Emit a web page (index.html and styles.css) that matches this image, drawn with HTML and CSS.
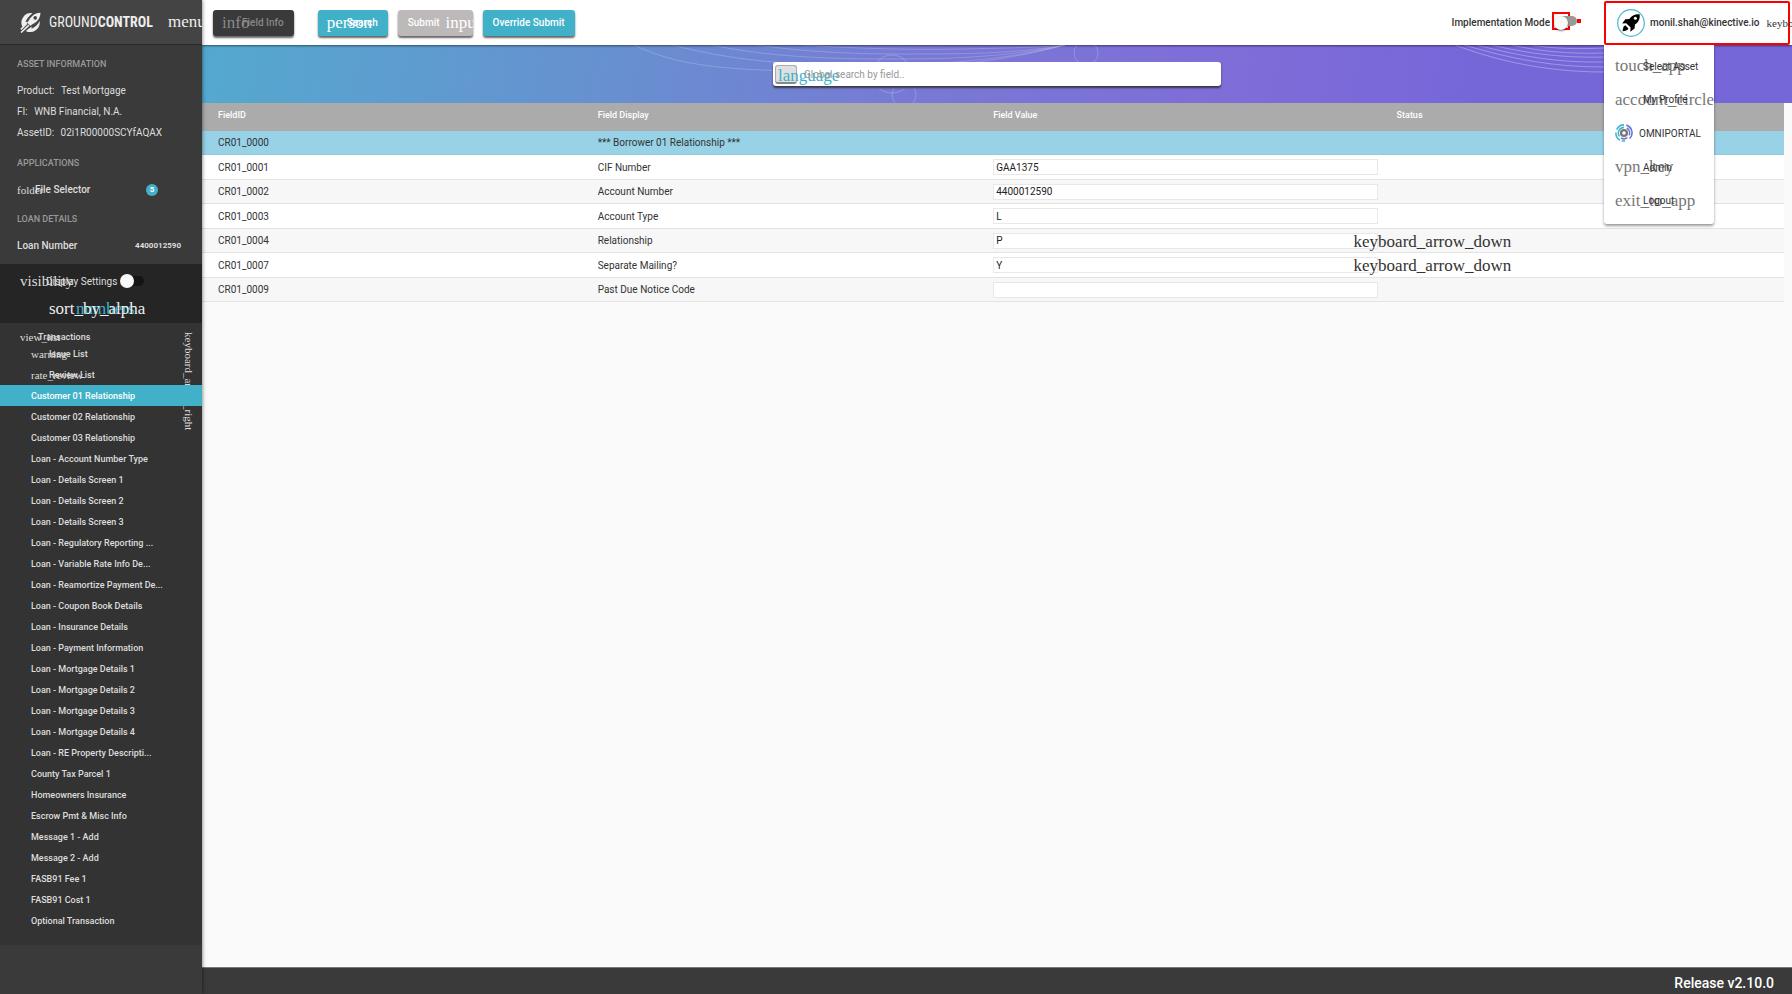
FILE: index.html
```html
<!DOCTYPE html>
<html lang="en">
<head>
    <meta charset="UTF-8">
    <meta name="viewport" content="width=device-width, initial-scale=1.0">
    <title>GroundControl</title>
    <link rel="stylesheet" href="styles.css">
</head>
<body>

<aside class="sidebar">
    <div class="brand">
        <svg class="brand-mark" viewBox="0 0 20 20" aria-hidden="true">
            <path d="M12 1.2A9 9 0 0 0 2.6 14.6L8.2 9.3L5.2 9.5C7 5.500 9.500 3 12 1.200Z" fill="#eee"/>
            <path d="M19.500.6C14.500.6 11 3.600 8.600 7.600L7 10.400L9.800 13L12.600 11.300C16.500 9 19.500 5.500 19.500.6Z" fill="#eee"/>
            <circle cx="14.500" cy="5.600" r="1.700" fill="#444"/>
            <path d="M18.600 8.600A9 9 0 0 1 5.500 18L11 13.800V16C14.500 14.500 17.500 11.500 18.600 8.600Z" fill="#eee"/>
            <path d="M1 19.500L8.500 12.500M.8 16.500L6.500 11" stroke="#eee" stroke-width="1.500"/>
        </svg>
        <span class="brand-name">GROUND<b>CONTROL</b></span>
        <button class="menu-button" aria-label="Menu"><i class="icon">menu</i></button>
    </div>

    <section class="info">
        <h2>Asset Information</h2>
        <p>Product: <span>Test Mortgage</span></p>
        <p>FI: <span>WNB Financial, N.A.</span></p>
        <p>AssetID: <span>02i1R00000SCYfAQAX</span></p>
        <h2>Applications</h2>
        <a class="row" href="#"><i class="icon small">folder</i>File Selector<b class="badge">5</b></a>
        <h2>Loan Details</h2>
        <div class="row">Loan Number<b class="loan-number">4400012590</b></div>
    </section>

    <section class="settings">
        <label class="display-settings">
            <i class="icon medium">visibility</i>Display Settings
            <input type="checkbox" class="switch">
        </label>
        <div class="sorting">
            <button class="sort-alpha"><i class="icon">sort_by_alpha</i></button>
            <button class="sort-number"><i class="icon">numbers</i></button>
        </div>
    </section>

    <nav class="transactions">
        <a class="group" href="#"><i class="icon small">view_list</i>Transactions</a>
        <i class="icon small expand">keyboard_arrow_right</i>
        <a href="#"><i class="icon small">warning</i>Issue List</a>
        <a href="#"><i class="icon small">rate_review</i>Review List</a>
        <a class="active" href="#">Customer 01 Relationship</a>
        <a href="#">Customer 02 Relationship</a>
        <a href="#">Customer 03 Relationship</a>
        <a href="#">Loan - Account Number Type</a>
        <a href="#">Loan - Details Screen 1</a>
        <a href="#">Loan - Details Screen 2</a>
        <a href="#">Loan - Details Screen 3</a>
        <a href="#">Loan - Regulatory Reporting ...</a>
        <a href="#">Loan - Variable Rate Info De...</a>
        <a href="#">Loan - Reamortize Payment De...</a>
        <a href="#">Loan - Coupon Book Details</a>
        <a href="#">Loan - Insurance Details</a>
        <a href="#">Loan - Payment Information</a>
        <a href="#">Loan - Mortgage Details 1</a>
        <a href="#">Loan - Mortgage Details 2</a>
        <a href="#">Loan - Mortgage Details 3</a>
        <a href="#">Loan - Mortgage Details 4</a>
        <a href="#">Loan - RE Property Descripti...</a>
        <a href="#">County Tax Parcel 1</a>
        <a href="#">Homeowners Insurance</a>
        <a href="#">Escrow Pmt &amp; Misc Info</a>
        <a href="#">Message 1 - Add</a>
        <a href="#">Message 2 - Add</a>
        <a href="#">FASB91 Fee 1</a>
        <a href="#">FASB91 Cost 1</a>
        <a href="#">Optional Transaction</a>
    </nav>
</aside>

<div class="page">
    <header class="toolbar">
        <button class="btn dark"><i class="icon">info</i>Field Info</button>
        <button class="btn"><i class="icon">person</i>Search</button>
        <button class="btn grey">Submit<i class="icon">input</i></button>
        <button class="btn">Override Submit</button>
        <label class="mode">
            Implementation Mode
            <span class="mode-switch"><input type="checkbox"></span>
        </label>
        <div class="user">
            <button class="user-button">
                <svg class="avatar" viewBox="0 0 28 28" aria-hidden="true">
                    <circle cx="14" cy="14" r="13.300" fill="#fff" stroke="#4db6cb" stroke-width="1.200"/>
                    <path d="M22.600 5.200C18 4.800 14.600 6.600 12.300 10L8.300 10.200L5.200 14.600L9.200 14.300L13.600 18.600L13.300 22.800L17.600 19.600L17.900 15.600C21.500 13.200 23.300 9.800 22.600 5.200Z" fill="#000"/>
                    <path d="M8.300 16.300C6.200 17.300 5.800 19.800 5.600 22.200C8 22 10.600 21.600 11.500 19.500Z" fill="#000"/>
                    <circle cx="18.400" cy="9.300" r="1.500" fill="#fff"/>
                </svg>
                monil.shah@kinective.io
                <i class="icon tiny">keyboard_arrow_down</i>
            </button>
            <nav class="user-menu">
                <a href="#"><i class="icon">touch_app</i>Select Asset</a>
                <a href="#"><i class="icon">account_circle</i>My Profile</a>
                <a class="portal" href="#">
                    <svg viewBox="0 0 16 16" fill="none" aria-hidden="true">
                        <path d="M8 .8A7.200 7.200 0 0 0 1.500 5M.8 7.500A7.200 7.200 0 0 0 4.500 14.300M8 3A5 5 0 0 0 4 11M6 14.800A7 7 0 0 0 9 15" stroke="#45b5d0" stroke-width="1.400"/>
                        <path d="M10 1A7.200 7.200 0 0 1 13 13M10.500 3.600A5 5 0 0 1 12.500 10M5.500 12.500A5 5 0 0 0 11 12" stroke="#6a78d4" stroke-width="1.400"/>
                        <circle cx="8" cy="8" r="2.600" stroke="#777" stroke-width="2"/>
                    </svg>OMNIPORTAL</a>
                <a href="#"><i class="icon">vpn_key</i>Admin</a>
                <a href="#"><i class="icon">exit_to_app</i>Logout</a>
            </nav>
        </div>
    </header>

    <div class="banner">
        <svg class="banner-lines" viewBox="0 0 1590 58" preserveAspectRatio="none" fill="none" stroke="#fff" stroke-opacity=".2" aria-hidden="true">
            <path d="M432 0C470 18 510 25 600 26S780 22 863 0"/>
            <path d="M470 0C540 18 600 20 660 20S790 18 863 0"/>
            <path d="M510 0C570 13 640 14 690 14S800 13 863 0"/>
            <path d="M555 0C610 8 660 9 710 9S810 9 863 0"/>
            <path d="M600 0C660 4 720 5 760 4S830 3 863 0"/>
            <circle cx="690" cy="29" r="19"/>
            <circle cx="702" cy="50" r="12"/>
            <circle cx="884" cy="8" r="12"/>
            <g stroke-opacity=".3">
                <path d="M1253 0C1290 14 1340 27 1402 27"/>
                <path d="M1262 0C1310 14 1350 22 1402 22"/>
                <path d="M1275 0C1320 12 1360 18 1402 17"/>
                <path d="M1290 0C1330 10 1370 13 1402 12"/>
                <path d="M1310 0C1340 7 1370 9 1402 8"/>
                <path d="M1330 0C1350 4 1380 4 1402 3"/>
            </g>
        </svg>
        <div class="search">
            <button aria-label="Search all fields"><i class="icon">language</i></button>
            <input type="text" placeholder="Global search by field.." aria-label="Global search by field">
        </div>
    </div>

    <main>
        <table class="fields">
            <thead>
                <tr><th>FieldID</th><th>Field Display</th><th>Field Value</th><th>Status</th></tr>
            </thead>
            <tbody>
                <tr class="heading"><td>CR01_0000</td><td>*** Borrower 01 Relationship ***</td><td></td><td></td></tr>
                <tr><td>CR01_0001</td><td><label for="cif">CIF Number</label></td><td><input id="cif" type="text" value="GAA1375"></td><td></td></tr>
                <tr><td>CR01_0002</td><td><label for="account">Account Number</label></td><td><input id="account" type="text" value="4400012590"></td><td></td></tr>
                <tr><td>CR01_0003</td><td><label for="type">Account Type</label></td><td><input id="type" type="text" value="L"></td><td></td></tr>
                <tr><td>CR01_0004</td><td><label for="relationship">Relationship</label></td><td><div class="combo"><input id="relationship" type="text" value="P"><i class="icon">keyboard_arrow_down</i></div></td><td></td></tr>
                <tr><td>CR01_0007</td><td><label for="mailing">Separate Mailing?</label></td><td><div class="combo"><input id="mailing" type="text" value="Y"><i class="icon">keyboard_arrow_down</i></div></td><td></td></tr>
                <tr><td>CR01_0009</td><td><label for="notice">Past Due Notice Code</label></td><td><input id="notice" type="text" value=""></td><td></td></tr>
            </tbody>
        </table>
    </main>

    <footer>Release v2.10.0</footer>
</div>

</body>
</html>
```
FILE: styles.css
```css
* {
    box-sizing: border-box;
}
body {
    margin: 0;
    display: flex;
    min-height: 100vh;
    overflow-x: hidden;
    background-color: #fafafa;
    color: #333;
    font-family: Roboto, sans-serif;
    font-size: 10px;
}
a {
    color: inherit;
    text-decoration: none;
}
button,
input {
    font: inherit;
    color: inherit;
    margin: 0;
}
button {
    padding: 0;
    border: none;
    background: none;
    cursor: pointer;
}
.icon {
    flex: none;
    width: 20px;
    font-family: "Liberation Serif", serif;
    font-size: 17px;
    font-style: normal;
    font-weight: 400;
    line-height: 20px;
    text-align: left;
    white-space: nowrap;
}
.icon.medium {
    width: 26px;
    font-size: 15px;
}
.icon.small {
    width: 18px;
    font-size: 11px;
}
.icon.tiny {
    width: 11px;
    font-size: 11px;
}

/* Sidebar */
.sidebar {
    position: relative;
    z-index: 2;
    flex: none;
    width: 202px;
    background-color: #3a3a3a;
    color: #ddd;
    box-shadow: 0 0 4px rgba(0, 0, 0, 0.6);
}
.brand {
    display: flex;
    align-items: center;
    height: 45px;
    padding-left: 20px;
    overflow: hidden;
    background-color: #444;
    border-bottom: 1px solid #2b2b2b;
}
.brand-mark {
    flex: none;
    width: 21px;
    height: 21px;
}
.brand-name {
    flex: none;
    width: 127px;
    padding-left: 8px;
    font-family: "Liberation Sans Narrow", "Roboto Condensed", Roboto, sans-serif;
    font-size: 14px;
    color: #eee;
}
.menu-button {
    color: #eee;
}
.info {
    padding: 0 21px 8px 17px;
}
.info h2 {
    margin: 0;
    padding: 9px 0 6px;
    font-size: 9px;
    font-weight: 500;
    line-height: 20px;
    text-transform: uppercase;
    color: #999;
}
.info p {
    margin: 0;
    line-height: 21px;
}
.info p + h2 {
    padding-top: 10px;
}
.info p span {
    padding-left: 4px;
}
.row {
    display: flex;
    align-items: center;
    height: 21px;
    font-weight: 500;
}
.badge {
    width: 12px;
    margin: 0 23px 0 auto;
    border-radius: 6px;
    background-color: #40b1c8;
    color: #fff;
    font-size: 8px;
    line-height: 12px;
    text-align: center;
}
.loan-number {
    margin-left: auto;
    font-size: 8px;
}
.settings {
    padding-top: 3px;
    background-color: #252525;
}
.display-settings,
.sorting {
    display: flex;
    align-items: center;
    height: 28px;
    padding-left: 20px;
}
.sorting {
    padding-left: 49px;
    color: #eee;
}
.sort-alpha {
    position: relative;
    z-index: 1;
    width: 27px;
}
.sort-number {
    color: #40b1c8;
}
.switch {
    appearance: none;
    position: relative;
    width: 24px;
    height: 10px;
    margin-left: 3px;
    border-radius: 5px;
    background-color: #151515;
}
.switch::before {
    content: "";
    position: absolute;
    top: -2px;
    left: 0;
    width: 14px;
    height: 14px;
    border-radius: 50%;
    background-color: #fafafa;
}
.transactions {
    position: relative;
    padding-bottom: 14px;
    background-color: #333;
    font-size: 9px;
    font-weight: 500;
}
.transactions a {
    display: flex;
    align-items: center;
    height: 21px;
    padding-left: 31px;
}
.transactions .group {
    height: 20px;
    padding: 8px 0 0 20px;
}
.transactions .active {
    position: relative;
    z-index: 1;
    background-color: #40b1c8;
    color: #fff;
}
.expand {
    position: absolute;
    top: 9px;
    right: 3px;
    writing-mode: vertical-rl;
}

/* Top bar */
.page {
    display: flex;
    flex: 1;
    flex-direction: column;
    min-width: 0;
}
.toolbar {
    position: relative;
    z-index: 1;
    display: flex;
    align-items: center;
    gap: 10px;
    height: 45px;
    padding: 0 2px 0 11px;
    background-color: #fff;
    box-shadow: 0 1px 2px rgba(0, 0, 0, 0.5);
    font-weight: 500;
}
.btn {
    display: flex;
    align-items: center;
    height: 26px;
    padding: 0 10px;
    overflow: hidden;
    border-radius: 3px;
    background-color: #40b1c8;
    box-shadow: 0 2px 2px rgba(0, 0, 0, 0.6);
    color: #fff;
}
.btn .icon:first-child {
    margin-left: -1px;
}
.btn.dark {
    margin-right: 14px;
    background-color: #3a3a3a;
    color: #888;
}
.btn.grey {
    background-color: #bdb9b9;
}
.btn.grey .icon {
    margin-left: 6px;
    width: 17px;
}
.mode {
    display: flex;
    align-items: center;
    gap: 2px;
    margin-left: auto;
}
.mode-switch {
    display: flex;
    position: relative;
    width: 29px;
    height: 14px;
    margin-bottom: 4px;
    align-items: center;
}
.mode-switch::before {
    content: "";
    width: 14px;
    height: 14px;
    border: 2px solid red;
}
.mode-switch::after {
    content: "";
    width: 4px;
    height: 4px;
    margin-left: auto;
    background-color: red;
}
.mode-switch input {
    appearance: none;
    position: absolute;
    top: 2px;
    left: 5px;
    width: 20px;
    height: 10px;
    border-radius: 5px;
    background-color: #999;
}
.mode-switch input::before {
    content: "";
    position: absolute;
    top: 0;
    left: -3px;
    width: 14px;
    height: 14px;
    border-radius: 50%;
    background-color: #fafafa;
    box-shadow: 0 1px 2px rgba(0, 0, 0, 0.5);
}
.user {
    position: relative;
    margin-left: 13px;
}
.user-button {
    display: flex;
    align-items: center;
    width: 186px;
    height: 44px;
    padding-left: 11px;
    border: 2px solid red;
    border-radius: 2px;
    white-space: nowrap;
}
.avatar {
    flex: none;
    width: 28px;
    height: 28px;
    margin-right: 5px;
}
.user-button .icon {
    margin-left: 7px;
}
.user-menu {
    position: absolute;
    top: 44px;
    left: 0;
    display: grid;
    grid-template-rows: repeat(5, 1fr);
    width: 110px;
    height: 179px;
    padding: 5px 0 6px;
    border-radius: 0 0 3px 3px;
    background-color: #fff;
    box-shadow: 0 2px 3px rgba(0, 0, 0, 0.4);
    font-weight: 400;
}
.user-menu a {
    display: flex;
    align-items: center;
    padding-left: 11px;
}
.user-menu .icon {
    width: 28px;
    color: #777;
}
.user-menu svg {
    width: 18px;
    height: 18px;
    margin-right: 6px;
}

/* Search banner */
.banner {
    position: relative;
    display: flex;
    align-items: center;
    justify-content: center;
    height: 58px;
    background: linear-gradient(100deg, #54a9cf 0%, #688fd0 27%, #7879d5 45%, #7f6dd8 65%, #7667d9 80%);
}
.banner-lines {
    position: absolute;
    inset: 0;
    width: 100%;
    height: 100%;
}
.search {
    position: relative;
    display: flex;
    align-items: center;
    width: 448px;
    height: 24px;
    padding: 0 2px;
    border-radius: 3px;
    background-color: #fff;
    box-shadow: 0 2px 2px rgba(50, 50, 50, 0.9);
}
.search button {
    width: 22px;
    height: 19px;
    padding-left: 2px;
    border: 1px solid #aaa;
    border-bottom: 2px solid #888;
    border-radius: 3px;
    background-color: #e0e0e0;
    color: #40b1c8;
}
.search .icon {
    display: block;
}
.search input {
    flex: 1;
    padding: 0 7px;
    border: none;
    background: none;
}
.search input::placeholder {
    color: #999;
}

/* Field table */
main {
    flex: 1;
    padding-right: 8px;
}
.fields {
    width: 100%;
    table-layout: fixed;
    border-spacing: 0;
}
.fields th {
    height: 28px;
    padding: 0 0 4px 16px;
    background-color: #ababab;
    color: #fff;
    font-size: 9px;
    font-weight: 500;
    text-align: left;
}
.fields th:nth-child(1) {
    width: 24%;
}
.fields th:nth-child(2) {
    width: 25%;
}
.fields td {
    height: 24px;
    padding: 0 0 0 16px;
    border-bottom: 1px solid #e3e3e3;
    background-color: #f7f7f7;
}
.fields td:nth-child(3) {
    padding-right: 3px;
}
.fields tr:nth-child(even) td {
    height: 25px;
    background-color: #fff;
}
.fields .heading td {
    border-bottom-color: #8fcadd;
    background-color: #97d2e6;
}
.fields input {
    display: block;
    width: 100%;
    height: 16px;
    padding: 0 2px;
    border: 1px solid #e8e8e8;
    background-color: #fff;
    color: #222;
}
.combo {
    display: flex;
    align-items: center;
    height: 16px;
}
.combo .icon {
    position: relative;
    width: 0;
    right: 24px;
    margin-top: 2px;
}
footer {
    height: 27px;
    padding-right: 18px;
    border-top: 1px solid #777;
    background-color: #3a3a3a;
    color: #fff;
    font-size: 14px;
    font-weight: 500;
    line-height: 30px;
    text-align: right;
}
```
